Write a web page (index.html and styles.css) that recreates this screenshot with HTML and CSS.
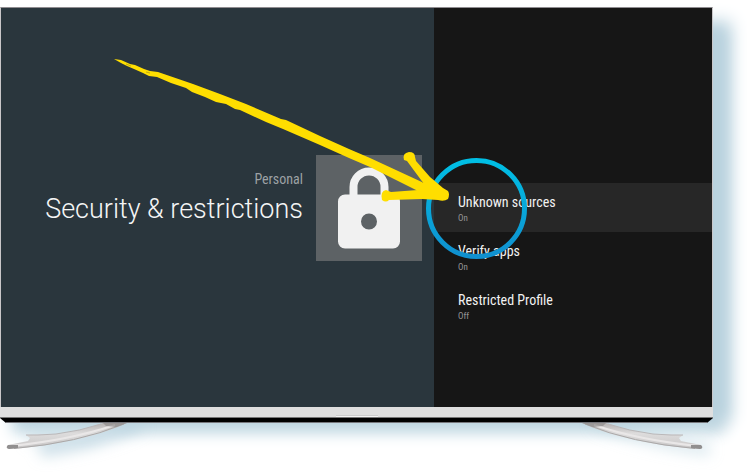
FILE: index.html
```html
<!DOCTYPE html>
<html lang="en">
<head>
<meta charset="utf-8">
<title>Security &amp; restrictions</title>
<link rel="stylesheet" href="styles.css">
</head>
<body>
<div class="stage">
  <div class="tv">
    <main class="screen">
      <section class="summary">
        <header class="heading">
          <p class="category">Personal</p>
          <h1 class="title">Security &amp; restrictions</h1>
        </header>
        <div class="tile">
          <svg class="lock" viewBox="0 0 106 106" aria-hidden="true">
            <path d="M37.500 42V32a15.500 15.500 0 0 1 31 0v10" fill="none" stroke="#f1f1f1" stroke-width="8"/>
            <path fill-rule="evenodd" fill="#f1f1f1" d="M29 39.500h48a7 7 0 0 1 7 7v40a7 7 0 0 1-7 7H29a7 7 0 0 1-7-7v-40a7 7 0 0 1 7-7ZM53 58.500a8 8 0 1 0 0 16 8 8 0 0 0 0-16Z"/>
          </svg>
        </div>
      </section>
      <nav class="options" aria-label="Security options">
        <button class="option selected" type="button"><span class="name">Unknown sources</span><span class="state">On</span></button>
        <button class="option" type="button"><span class="name">Verify apps</span><span class="state">On</span></button>
        <button class="option" type="button"><span class="name">Restricted Profile</span><span class="state">Off</span></button>
      </nav>
    </main>
    <div class="bezel"><span class="mark"></span></div>
    <div class="base"></div>
  </div>
  <svg class="stand" viewBox="0 0 747 50" aria-hidden="true">
    <defs>
      <linearGradient id="leg" x1="0" y1="0" x2="0" y2="1">
        <stop offset="0" stop-color="#b5b2b2"/><stop offset=".4" stop-color="#dddcdc"/><stop offset="1" stop-color="#c8c6c6"/>
      </linearGradient>
      <filter id="soft" x="-20%" y="-80%" width="140%" height="260%"><feGaussianBlur stdDeviation="7"/></filter>
    </defs>
    <g fill="none" stroke="#b9d3df" filter="url(#soft)">
      <path d="M28 14H100" stroke-width="14" opacity=".4"/>
      <path d="M40 27Q95 20 140 0" stroke-width="14" opacity=".7"/>
      <path d="M595 -2Q640 18 710 27" stroke-width="12" opacity=".5"/>
    </g>
    <g id="foot">
      <path fill="url(#leg)" d="M8 22L28 18L30 15L26 12L56 11Q80 8 103 0H127Q108 9 82 15Q45 24 9 26Q5 25 8 22Z"/>
      <path d="M26 12H38L56 11Q80 8 101 1" fill="none" stroke="#b9b7b8"/>
      <path d="M11 23Q70 17 115 2" fill="none" stroke="#e9e7e7" stroke-width="2"/>
      <path d="M14 25.500Q78 20 124 1" fill="none" stroke="#aaa8a8"/>
      <path d="M8 22H18V25L9 26Q5 25 8 22Z" fill="#918f8f"/>
      <path d="M103 0H127L116 4L106 3Z" fill="#8e8b8b" opacity=".7"/>
    </g>
    <use href="#foot" transform="translate(709 0) scale(-1 1)"/>
  </svg>
  <svg class="annotation" viewBox="0 0 747 473" aria-hidden="true">
    <defs>
      <linearGradient id="ring" x1="0" y1="0" x2="0" y2="1">
        <stop offset="0" stop-color="#00bfe5"/><stop offset="1" stop-color="#1090cf"/>
      </linearGradient>
    </defs>
    <circle cx="476.500" cy="208.500" r="48" fill="none" stroke="url(#ring)" stroke-width="5"/>
    <g fill="#ffde00">
      <path d="M114 59L121 60L130 64L135 65L144 69L150 71L158 72L193 84L220 94L246 104L281 119L286 120L320 136L349 149L370 158L424 183L440 196L420 193L416 190L370 167L349 158L320 145L283 129L266 122L240 110L235 109L226 104L216 102L205 97L192 92L186 88L171 83L157 77L149 76L143 73L134 69L127 66L121 63Z"/>
      <path d="M404 160Q402 153 409 152Q415 152 415 157L416 161L430 177L443 188L448 191Q450 194 448 199Q444 202 438 200L422 199L389 200Q386 203 382 200Q380 191 386 190L391 192L418 190L424 184L407 161Z"/>
    </g>
    <path d="M126 64L131 66M146 72L150 73" stroke="#2a363d" stroke-width="1" opacity=".3"/>
  </svg>
</div>
</body>
</html>
```
FILE: styles.css
```css
* { box-sizing: border-box; }
body {
  margin: 0;
  background: #fff;
  font-family: "Roboto Condensed", Roboto, "Liberation Sans", sans-serif;
}
.stage {
  position: relative;
  display: flex;
  flex-direction: column;
  min-height: 100vh;
  padding-top: 7px;
  overflow: hidden;
}
.tv {
  display: flex;
  flex: 1;
  flex-direction: column;
  margin-right: 34px;
}
.screen {
  display: grid;
  flex: 1;
  grid-template-columns: 433fr 278fr;
  border: 1px solid #c9c7c9;
  border-top-color: #8f8c90;
  border-bottom: 0;
  box-shadow: 18px 14px 16px #b9d2de, 12px 26px 14px #c3d9e3;
}
.summary {
  display: flex;
  align-items: center;
  justify-content: flex-end;
  gap: 13px;
  padding-right: 12px;
  background: #2a363d;
}
.heading {
  padding-bottom: 18px;
  text-align: right;
}
.category, .title { margin: 0; }
.category {
  color: #9da2a5;
  font-size: 14px;
  line-height: 20px;
}
.title {
  color: #f4f5f5;
  font-family: Roboto, "Liberation Sans", sans-serif;
  font-size: 27px;
  font-weight: 300;
  line-height: 40px;
}
.tile {
  width: 106px;
  background: #5d6265;
}
.lock { display: block; }
.options {
  display: flex;
  flex-direction: column;
  padding-top: 175px;
  background: #161616;
}
.option {
  display: flex;
  flex-direction: column;
  padding: 10px 24px 8px;
  border: 0;
  background: none;
  font-family: inherit;
  text-align: left;
}
.selected { background: #272727; }
.name {
  color: #f2f2f2;
  font-size: 14px;
  line-height: 19px;
}
.state {
  color: #969696;
  font-size: 9px;
  line-height: 12px;
}
.bezel {
  position: relative;
  display: flex;
  align-items: flex-end;
  justify-content: center;
  height: 11px;
  background: #dfdfdf;
  border-bottom: 1px solid #777;
}
.mark {
  width: 42px;
  height: 2px;
  background: #f5f5f5;
  border-top: 1px solid #ccc;
}
.base {
  position: relative;
  height: 5px;
  background: #000;
  border-bottom: 1px solid #77777c;
  clip-path: polygon(0 0, 100% 0, calc(100% - 6px) 100%, 6px 100%);
}
.stand {
  position: relative;
  display: block;
  width: 100%;
}
.annotation {
  position: absolute;
  top: 0;
  left: 0;
  width: 100%;
  pointer-events: none;
}
```
